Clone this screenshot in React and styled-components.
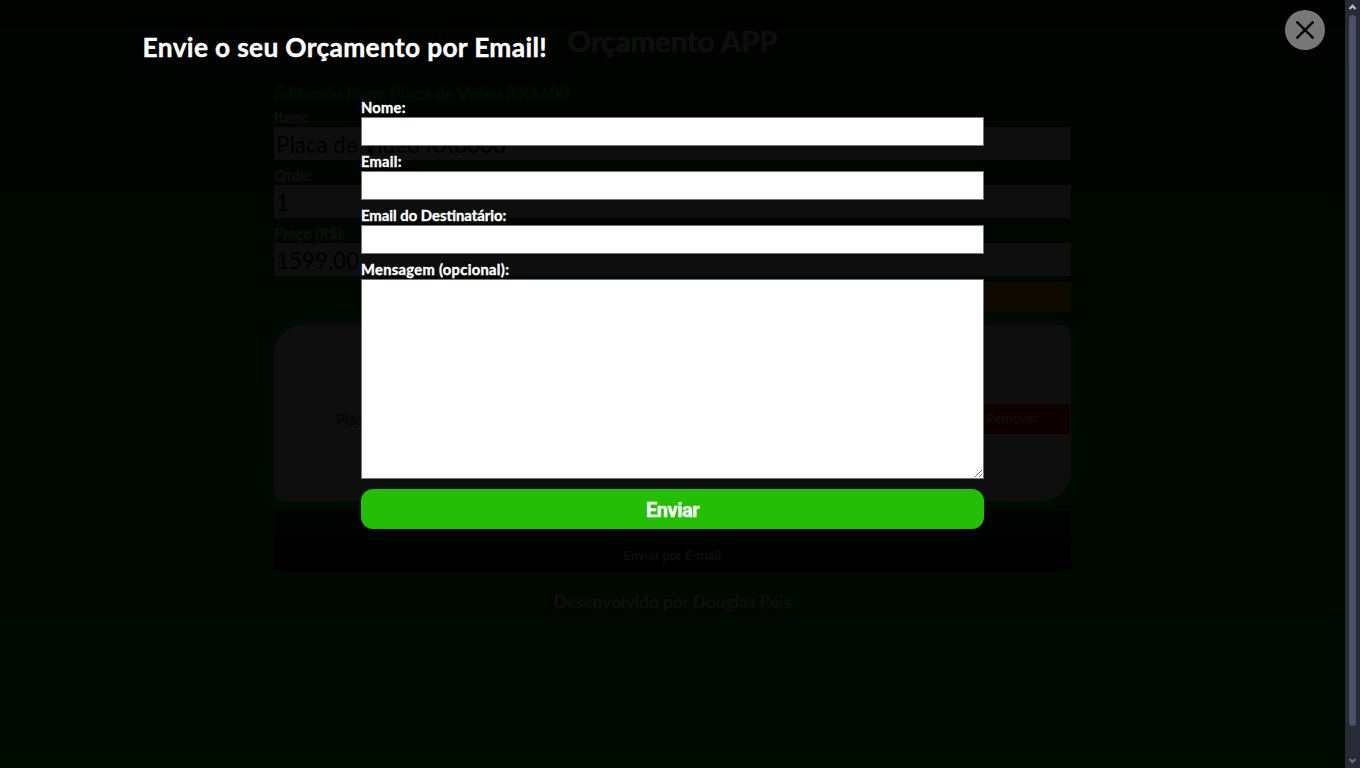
import React from "react";
import styled, { createGlobalStyle } from "styled-components";

const Global = createGlobalStyle`
  * { box-sizing: border-box; margin: 0; padding: 0; }
  body { background: #000; overflow: hidden; font-family: Lato, "Liberation Sans", sans-serif; }
`;

const Screen = styled.div`
  display: grid;
  grid-template-columns: 1345px 15px;
  height: 768px;
`;

const Viewport = styled.div`
  position: relative;
  height: 768px;
  overflow: hidden;
  background: linear-gradient(180deg, #002800 0%, #005000 12%, #008c00 50%, #00be00 100%);
`;

const Page = styled.main`
  display: flex;
  flex-direction: column;
  width: 797px;
  margin: 0 auto;
`;

const PageTitle = styled.h1`
  height: 83px;
  line-height: 81px;
  text-align: center;
  color: #fff;
  font-size: 29.3px;
  -webkit-text-stroke: 0.6px #fff;
`;

const Editing = styled.h3`
  height: 25px;
  line-height: 21px;
  color: #00ff14;
  font-size: 17.25px;
  -webkit-text-stroke: 0.3px #00ff14;
  white-space: nowrap;
`;

const PageLabel = styled.label`
  height: ${(p) => p.$h || 25}px;
  line-height: 18px;
  color: #fff;
  font-size: 14.8px;
  font-weight: 700;
  -webkit-text-stroke: 0.3px #fff;
  padding-top: ${(p) => p.$pad ?? 6}px;
`;

const PageInput = styled.div`
  height: 33px;
  background: #fff;
  color: #000;
  font-size: 22.4px;
  line-height: 35px;
  padding-left: 2px;
`;

const Split = styled.div`
  display: grid;
  grid-template-columns: 1fr 1fr;
  height: 30px;
  margin-top: 6px;
`;

const Fill = styled.div`
  background: ${(p) => p.$color};
`;

const Card = styled.section`
  display: flex;
  align-items: center;
  justify-content: space-between;
  height: 176px;
  margin-top: 13px;
  padding: 12px 1px 0 62px;
  border-radius: 30px 10px 30px 10px;
  background: #fff;
  box-shadow: 0 0 20px 2px #28ff3c;
  font-size: 14.7px;
`;

const Remove = styled.div`
  width: 116px;
  height: 30px;
  background: #ff0000;
  color: #fff;
  font: 500 13px/30px Roboto, sans-serif;
  text-align: center;
`;

const Wide = styled.div`
  position: relative;
  height: 30px;
  margin-top: ${(p) => p.$top || 0}px;
  background: ${(p) => p.$color};
  color: #fff;
  font: 500 12.9px/30px Roboto, sans-serif;
  text-align: center;
`;

const Footer = styled.footer`
  margin-top: 19px;
  line-height: 23px;
  color: #fff;
  font-size: 17.3px;
  font-weight: 700;
  -webkit-text-stroke: 0.3px #fff;
  text-align: center;
  text-shadow: 0 0 5px #000;
`;

const Overlay = styled.div`
  position: absolute;
  inset: 0;
  display: flex;
  flex-direction: column;
  align-items: center;
  background: rgba(0, 0, 0, 0.945);
  color: #fff;
`;

const ModalTitle = styled.h2`
  align-self: flex-start;
  height: 98px;
  padding: 30px 0 0 142.6px;
  font-size: 26.3px;
  letter-spacing: 0.34px;
  line-height: 35px;
  -webkit-text-stroke: 0.4px #fff;
  white-space: nowrap;
`;

const Form = styled.form`
  display: flex;
  flex-direction: column;
  width: 623px;
`;

const Field = styled.label`
  display: flex;
  flex-direction: column;
  margin-bottom: ${(p) => p.$gap ?? 6}px;
`;

const Caption = styled.span`
  align-self: flex-start;
  height: 19px;
  font-size: ${(p) => p.$size || 14.7}px;
  font-weight: 700;
  line-height: 19px;
  letter-spacing: ${(p) => p.$track || 0}px;
  -webkit-text-stroke: 0.35px #fff;
`;

const Input = styled.input`
  height: 29px;
  border: 1px solid #767676;
  border-radius: 0;
  background: #fff;
  outline: none;
`;

const Message = styled.textarea`
  height: 200px;
  border: 1px solid #767676;
  background: #fff;
  resize: both;
  outline: none;
`;

const Submit = styled.button`
  height: 40px;
  padding-top: 2px;
  border: 0;
  border-radius: 12px;
  background: #22bf04;
  color: #fff;
  font: 700 20px/38px Roboto, sans-serif;
  letter-spacing: -0.45px;
  -webkit-text-stroke: 0.3px #fff;
`;

const Close = styled.button`
  position: absolute;
  top: 10px;
  right: 20px;
  display: flex;
  width: 40px;
  height: 40px;
  border: 0;
  border-radius: 50%;
  background: #777;
  align-items: center;
  justify-content: center;
`;

const Track = styled.div`
  display: flex;
  flex-direction: column;
  align-items: center;
  justify-content: space-between;
  background: #282a36;
`;

const Thumb = styled.div`
  width: 7px;
  height: 711px;
  border-radius: 4px;
  background: #4d4f68;
`;

const Arrow = ({ down }) => (
  <svg width="15" height={down ? 42 : 15} viewBox={down ? "0 -27 15 42" : "0 0 15 15"}>
    <path
      d={down ? "M4.5 6 L7.5 9 L10.5 6" : "M4.5 9 L7.5 5.8 L10.5 9"}
      fill="none"
      stroke={down ? "#6c6d72" : "#c1c1c4"}
      strokeWidth="2.2"
    />
  </svg>
);

export default function App() {
  return (
    <>
      <Global />
      <Screen>
        <Viewport>
          <Page>
            <PageTitle>Orçamento APP</PageTitle>
            <Editing>Editando Item: Placa de Vídeo RX6600</Editing>
            <PageLabel $h={19} $pad={0}>Item:</PageLabel>
            <PageInput>Placa de Vídeo RX6600</PageInput>
            <PageLabel>Qtde:</PageLabel>
            <PageInput>1</PageInput>
            <PageLabel>Preço (R$):</PageLabel>
            <PageInput>1599,00</PageInput>
            <Split>
              <Fill $color="#008000" />
              <Fill $color="#ffb400" />
            </Split>
            <Card>
              <span>Placa de Vídeo RX6600</span>
              <Remove>Remover</Remove>
            </Card>
            <Wide $top={10} $color="#003c28">Gerar Planilha do Excel</Wide>
            <Wide $color="#000">Enviar por E-mail</Wide>
            <Footer>Desenvolvido por Douglas Reis</Footer>
          </Page>
          <Overlay>
            <ModalTitle>Envie o seu Orçamento por Email!</ModalTitle>
            <Form>
              <Field><Caption $track={0.25}>Nome:</Caption><Input /></Field>
              <Field><Caption $track={0.25}>Email:</Caption><Input /></Field>
              <Field><Caption $size={14.82}>Email do Destinatário:</Caption><Input /></Field>
              <Field $gap={10}><Caption $track={0.32}>Mensagem (opcional):</Caption><Message /></Field>
              <Submit type="button">Enviar</Submit>
            </Form>
            <Close aria-label="Fechar">
              <svg width="20" height="20" viewBox="0 0 20 20">
                <path d="M2.3 2.3 L17.7 17.7 M17.7 2.3 L2.3 17.7" stroke="#000" strokeWidth="2.5" strokeLinecap="round" />
              </svg>
            </Close>
          </Overlay>
        </Viewport>
        <Track>
          <Arrow />
          <Thumb />
          <Arrow down />
        </Track>
      </Screen>
    </>
  );
}
